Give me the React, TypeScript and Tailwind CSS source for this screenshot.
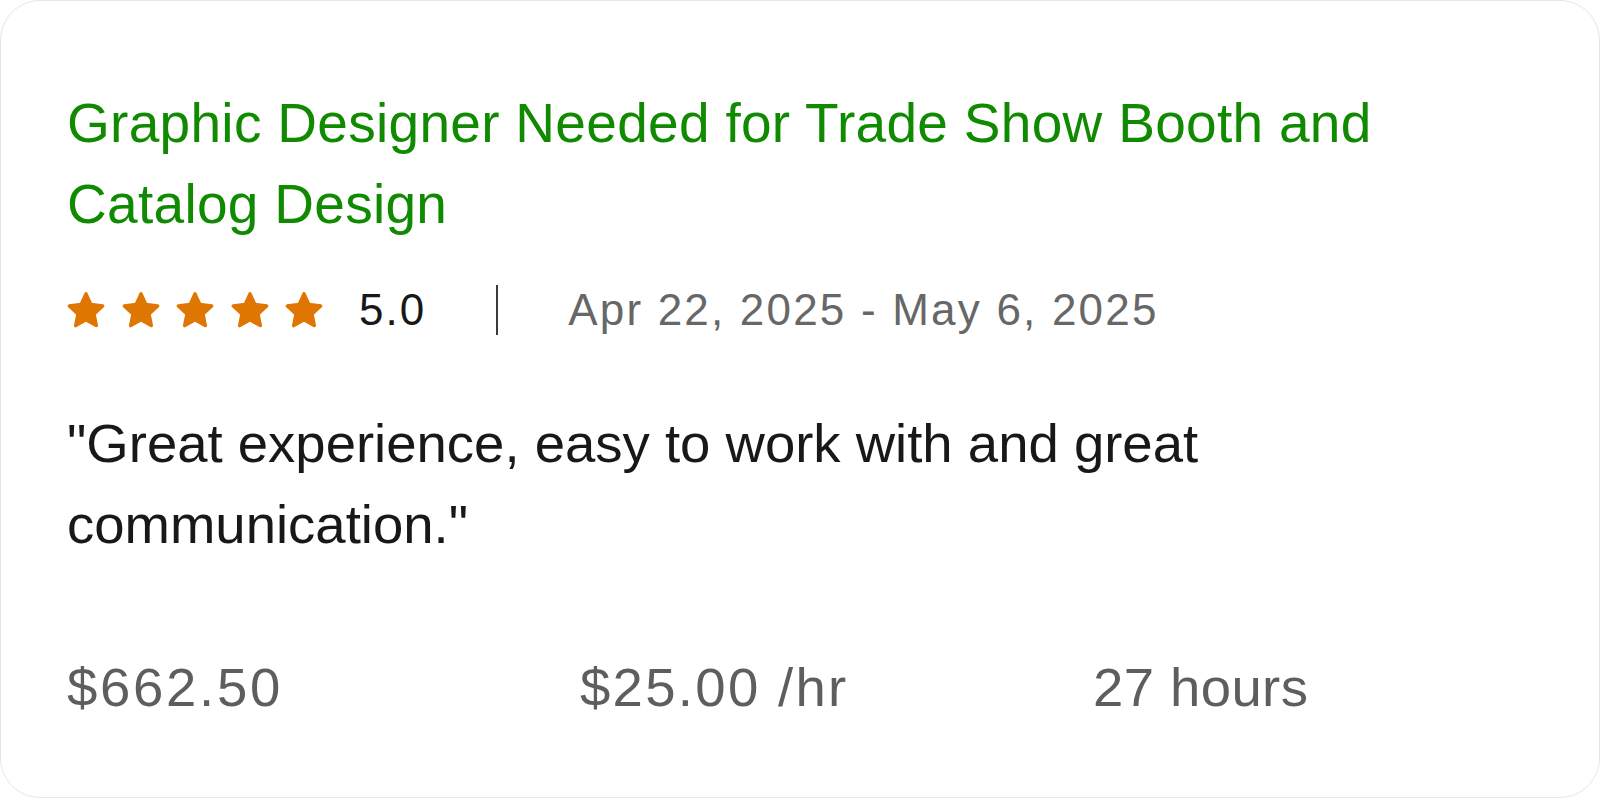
import React from "react";

function Star() {
  return (
    <svg viewBox="0 0 24 24" className="w-[42px] h-[42px] shrink-0" aria-hidden="true">
      <polygon
        points="12,2.8 14.82,8.92 21.51,9.71 16.57,14.3 17.88,20.89 12,17.6 6.12,20.89 7.43,14.3 2.49,9.71 9.18,8.92"
        fill="#e07602"
        stroke="#e07602"
        strokeWidth="2"
        strokeLinejoin="round"
      />
    </svg>
  );
}

export default function App() {
  return (
    <div className="w-[1600px] h-[798px] bg-white" style={{ fontFamily: '"Liberation Sans", Arial, sans-serif' }}>
      <div className="w-full h-full rounded-[40px] border border-[#e6e6e6] bg-white pl-[66px] pr-[66px] pt-[82px] flex flex-col">
        <h2 className="text-[55px] leading-[81px] text-[#108a00] font-normal tracking-[0.3px] max-w-[1400px]">
          Graphic Designer Needed for Trade Show Booth and Catalog Design
        </h2>

        <div className="mt-[32px] h-[66px] flex items-center">
          <div className="flex items-center gap-[12.5px] -ml-[2px]">
            <Star />
            <Star />
            <Star />
            <Star />
            <Star />
          </div>
          <span className="ml-[34px] text-[44px] leading-[66px] text-[#181818] tracking-[2px]">5.0</span>
          <div className="mx-[70px] w-[2px] h-[50px] bg-[#3a3a3a]" />
          <span className="text-[44px] leading-[66px] text-[#676767] tracking-[2.2px]">
            Apr 22, 2025 - May 6, 2025
          </span>
        </div>

        <p className="mt-[60px] text-[54.5px] leading-[81px] text-[#181818] max-w-[1200px]">
          "Great experience, easy to work with and great communication."
        </p>

        <div className="mt-[82px] flex text-[54.5px] leading-[81px] text-[#5e5e5e]">
          <div className="w-[513px] tracking-[2.7px]">$662.50</div>
          <div className="w-[513px] tracking-[2.3px]">$25.00 /hr</div>
          <div className="tracking-[0.4px]">27 hours</div>
        </div>
      </div>
    </div>
  );
}
